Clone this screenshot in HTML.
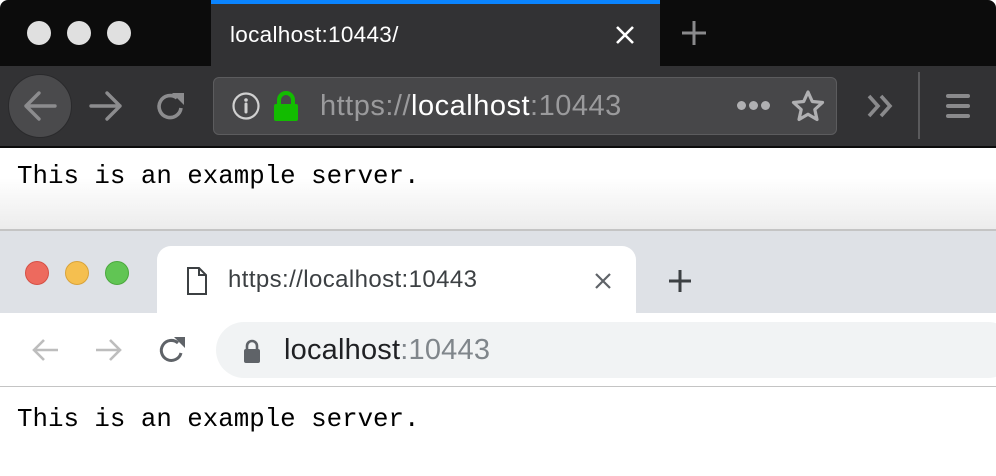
<!DOCTYPE html>
<html><head><style>
*{margin:0;padding:0;box-sizing:border-box}
body{width:996px;height:476px;overflow:hidden;position:relative;background:#fff;font-family:"Liberation Sans",sans-serif}
.a{position:absolute}
.mono{font-family:"Liberation Mono",monospace;font-size:25.8px;color:#000;white-space:pre}
</style></head><body>
<!-- Firefox -->
<div class="a" style="left:0;top:0;width:996px;height:66px;background:#0c0c0c;border-radius:8px 8px 0 0"></div>
<div class="a" style="left:27px;top:21px;width:24px;height:24px;border-radius:50%;background:#e0e0e0"></div>
<div class="a" style="left:67px;top:21px;width:24px;height:24px;border-radius:50%;background:#e0e0e0"></div>
<div class="a" style="left:107px;top:21px;width:24px;height:24px;border-radius:50%;background:#e0e0e0"></div>
<div class="a" style="left:211px;top:0;width:449px;height:66px;background:#323234"></div>
<div class="a" style="left:211px;top:0;width:449px;height:4px;background:#0a84ff"></div>
<div class="a" style="left:230px;top:22px;color:#fff;font-size:22.5px;letter-spacing:0.3px">localhost:10443/</div>
<svg class="a" style="left:614px;top:24px" width="22" height="22"><path d="M3 3L19 19M19 3L3 19" stroke="#fff" stroke-width="2.6"/></svg>
<svg class="a" style="left:680px;top:19px" width="28" height="28"><path d="M14 2V26M2 14H26" stroke="#8a8a8c" stroke-width="3"/></svg>
<div class="a" style="left:0;top:66px;width:996px;height:80px;background:#323234"></div>
<div class="a" style="left:0;top:146px;width:996px;height:2px;background:#0c0c0c"></div>
<div class="a" style="left:8px;top:74px;width:64px;height:64px;border-radius:50%;background:#4a4a4c;border:1px solid #2a2a2c"></div>
<svg class="a" style="left:22px;top:90px" width="36" height="32"><path d="M33 16H4M17 3L4 16L17 29" stroke="#8c8c8e" stroke-width="3.4" fill="none" stroke-linecap="round" stroke-linejoin="round"/></svg>
<svg class="a" style="left:88px;top:90px" width="36" height="32"><path d="M3 16H32M19 3L32 16L19 29" stroke="#8c8c8e" stroke-width="3.4" fill="none" stroke-linecap="round" stroke-linejoin="round"/></svg>
<svg class="a" style="left:155px;top:90px" width="34" height="34"><path d="M26 18A11 11 0 1 1 22 8" stroke="#8c8c8e" stroke-width="3.6" fill="none"/><path d="M17 3H29V15Z" fill="#8c8c8e"/></svg>
<div class="a" style="left:213px;top:77px;width:624px;height:58px;background:#474749;border:1px solid #5c5c5e;border-radius:6px"></div>
<svg class="a" style="left:231px;top:91px" width="30" height="30"><circle cx="15" cy="15" r="12.5" stroke="#d0d0d0" stroke-width="2.2" fill="none"/><circle cx="15" cy="9" r="1.8" fill="#d0d0d0"/><path d="M15 13V21" stroke="#d0d0d0" stroke-width="3" stroke-linecap="round"/></svg>
<svg class="a" style="left:273px;top:91px" width="26" height="30"><path d="M6 14V9A7 7 0 0 1 20 9V14" stroke="#12bc00" stroke-width="4" fill="none"/><rect x="1" y="13" width="24" height="17" rx="2" fill="#12bc00"/></svg>
<div class="a" style="left:320px;top:90px;font-size:29px;color:#9a9a9c;letter-spacing:0.5px">https://<span style="color:#fff">localhost</span>:10443</div>
<div class="a" style="left:737px;top:101px;width:9px;height:9px;border-radius:50%;background:#b0b0b2"></div>
<div class="a" style="left:749px;top:101px;width:9px;height:9px;border-radius:50%;background:#b0b0b2"></div>
<div class="a" style="left:761px;top:101px;width:9px;height:9px;border-radius:50%;background:#b0b0b2"></div>
<svg class="a" style="left:790px;top:89px" width="36" height="34"><path d="M18 3L22.3 12.5L32.5 13.5L24.8 20.5L27 30.5L18 25.3L9 30.5L11.2 20.5L3.5 13.5L13.7 12.5Z" stroke="#b0b0b2" stroke-width="3.2" fill="none" stroke-linejoin="round"/></svg>
<svg class="a" style="left:866px;top:93px" width="30" height="26"><path d="M3 3L12 13L3 23M15 3L24 13L15 23" stroke="#8a8a8c" stroke-width="3.6" fill="none"/></svg>
<div class="a" style="left:918px;top:72px;width:2px;height:67px;background:#5a5a5c"></div>
<div class="a" style="left:946px;top:94px;width:24px;height:4px;background:#8a8a8c;border-radius:2px"></div>
<div class="a" style="left:946px;top:104px;width:24px;height:4px;background:#8a8a8c;border-radius:2px"></div>
<div class="a" style="left:946px;top:114px;width:24px;height:4px;background:#8a8a8c;border-radius:2px"></div>
<div class="a" style="left:0;top:148px;width:996px;height:81px;background:linear-gradient(#fff 0,#fff 30px,#ececec 81px)"></div>
<div class="a mono" style="left:17px;top:162px">This is an example server.</div>
<div class="a" style="left:0;top:229px;width:996px;height:2px;background:#c4c4c4"></div>
<!-- Chrome -->
<div class="a" style="left:0;top:231px;width:996px;height:82px;background:#dee1e6"></div>
<div class="a" style="left:25px;top:261px;width:24px;height:24px;border-radius:50%;background:#ed6a5e;border:1px solid #d55045"></div>
<div class="a" style="left:65px;top:261px;width:24px;height:24px;border-radius:50%;background:#f5bf4f;border:1px solid #d9a33a"></div>
<div class="a" style="left:105px;top:261px;width:24px;height:24px;border-radius:50%;background:#61c554;border:1px solid #4ba83e"></div>
<div class="a" style="left:157px;top:246px;width:479px;height:70px;background:#fff;border-radius:14px 14px 0 0"></div>
<svg class="a" style="left:186px;top:266px" width="22" height="30"><path d="M2 2H13L20 9V28H2Z M13 2V9H20" stroke="#3c4043" stroke-width="2" fill="none"/></svg>
<div class="a" style="left:228px;top:266px;font-size:24px;color:#3c4043;letter-spacing:0.4px">https://localhost:10443</div>
<svg class="a" style="left:594px;top:272px" width="18" height="18"><path d="M2 2L16 16M16 2L2 16" stroke="#5f6368" stroke-width="2.2"/></svg>
<svg class="a" style="left:667px;top:268px" width="26" height="26"><path d="M13 2V24M2 13H24" stroke="#3c4043" stroke-width="3"/></svg>
<div class="a" style="left:0;top:313px;width:996px;height:73px;background:#fff"></div>
<svg class="a" style="left:30px;top:337px" width="30" height="26"><path d="M28 13H4M14 3L4 13L14 23" stroke="#bdbdbd" stroke-width="2.6" fill="none"/></svg>
<svg class="a" style="left:94px;top:337px" width="30" height="26"><path d="M2 13H26M16 3L26 13L16 23" stroke="#bdbdbd" stroke-width="2.6" fill="none"/></svg>
<svg class="a" style="left:157px;top:334px" width="32" height="32"><path d="M24 19A10 10 0 1 1 21 9" stroke="#5f6368" stroke-width="3" fill="none"/><path d="M17 3H28V14Z" fill="#5f6368"/></svg>
<div class="a" style="left:216px;top:322px;width:800px;height:56px;background:#f1f3f4;border-radius:28px"></div>
<svg class="a" style="left:242px;top:338px" width="20" height="26"><path d="M5 12V8A5 5 0 0 1 15 8V12" stroke="#5f6368" stroke-width="2.6" fill="none"/><rect x="2" y="11" width="16" height="14" rx="2" fill="#5f6368"/></svg>
<div class="a" style="left:284px;top:334px;font-size:29px;color:#202124;letter-spacing:0.2px">localhost<span style="color:#80868b">:10443</span></div>
<div class="a" style="left:0;top:386px;width:996px;height:1px;background:#c4c4c4"></div>
<div class="a mono" style="left:17px;top:405px">This is an example server.</div>
</body></html>
